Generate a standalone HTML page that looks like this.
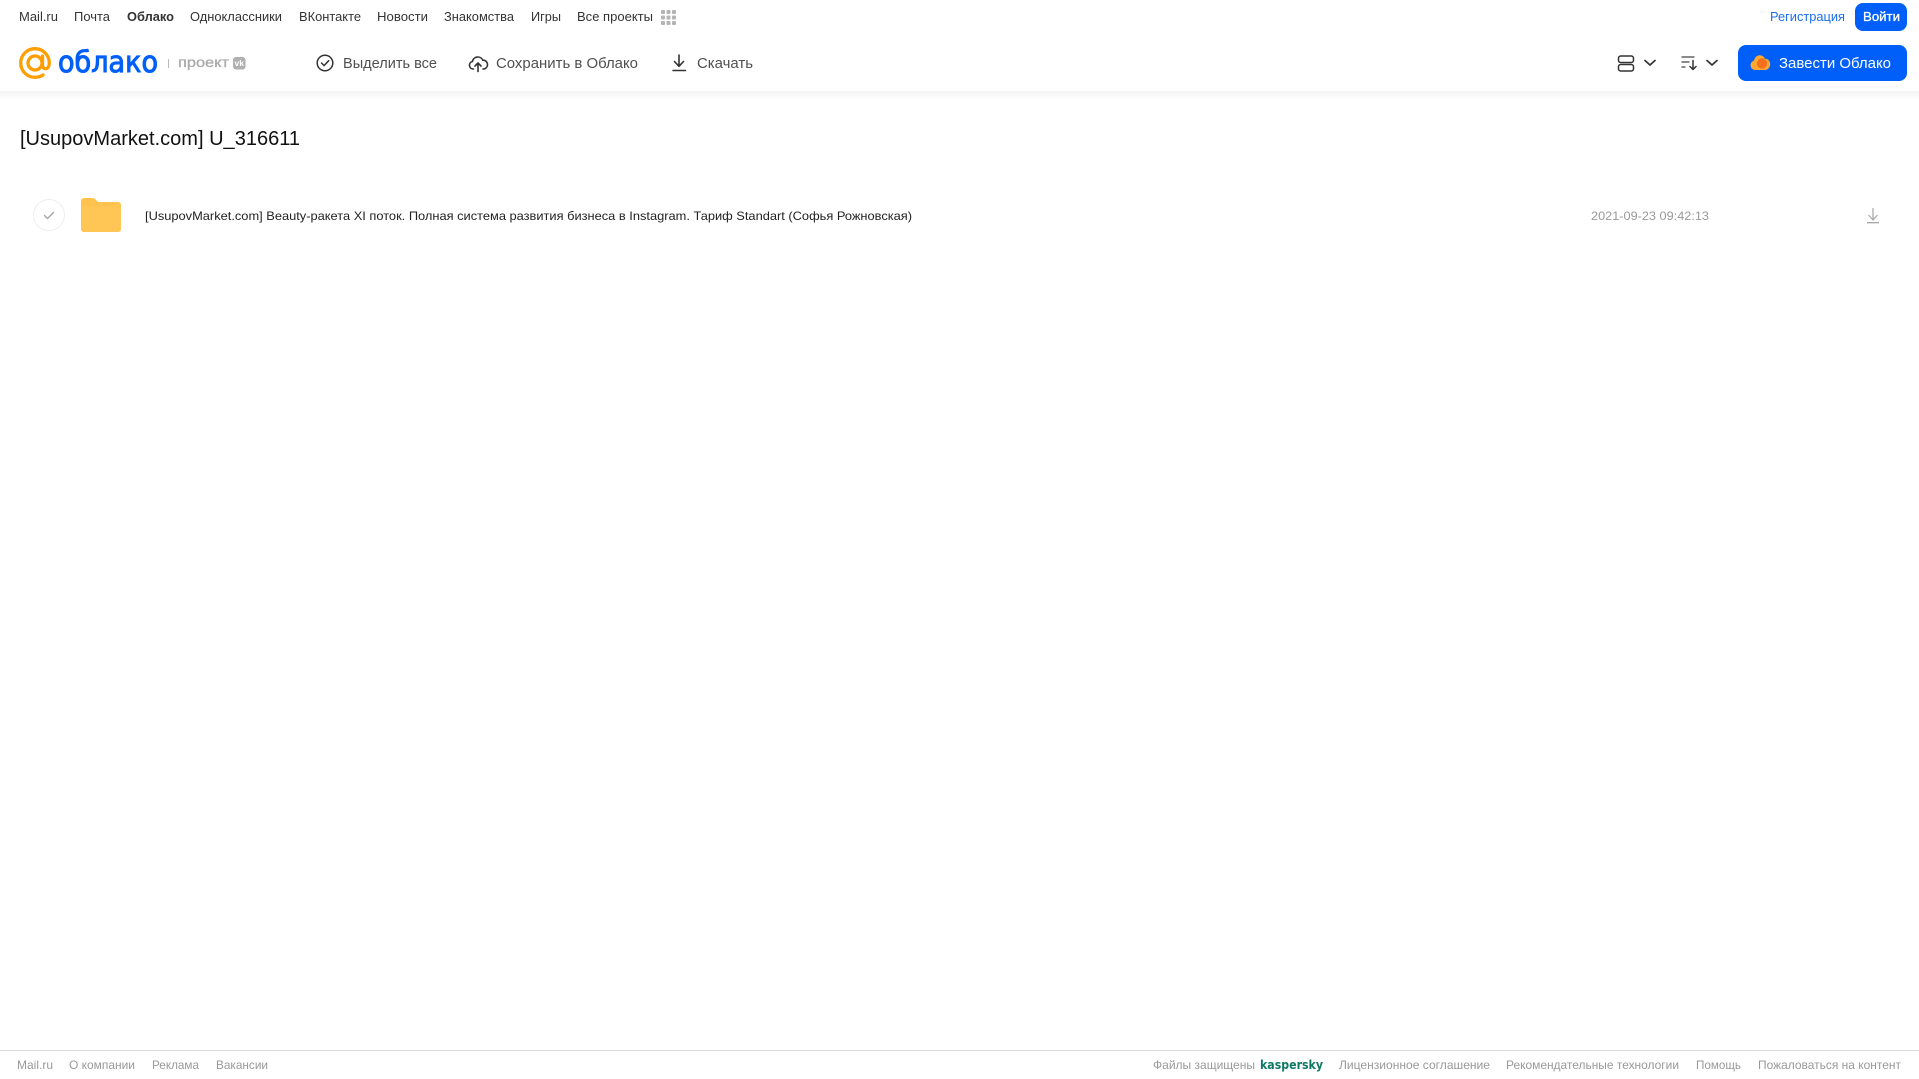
<!DOCTYPE html>
<html lang="ru">
<head>
<meta charset="utf-8">
<title>Облако</title>
<style>
html,body{margin:0;padding:0;width:1919px;height:1079px;overflow:hidden;background:#fff}
svg{display:block}
text{font-family:"Liberation Sans",Arial,sans-serif;white-space:pre}
.n{font-size:13px;fill:#333}
.t{font-size:15px;fill:#505050}
.f{font-size:12px;fill:#999}
</style>
</head>
<body>
<svg width="1919" height="1079" viewBox="0 0 1919 1079" xmlns="http://www.w3.org/2000/svg">
<defs>
<linearGradient id="sh" x1="0" y1="0" x2="0" y2="1"><stop offset="0" stop-color="#f3f3f3"/><stop offset="1" stop-color="#fff"/></linearGradient>
</defs>
<rect x="0" y="91" width="1919" height="9" fill="url(#sh)"/>

<!-- top nav -->
<text class="n" x="19" y="21" textLength="39" lengthAdjust="spacingAndGlyphs">Mail.ru</text>
<text class="n" x="74" y="21" textLength="36" lengthAdjust="spacingAndGlyphs">Почта</text>
<text class="n" x="127" y="21" textLength="47" lengthAdjust="spacingAndGlyphs" font-weight="700">Облако</text>
<text class="n" x="190" y="21" textLength="92" lengthAdjust="spacingAndGlyphs">Одноклассники</text>
<text class="n" x="299" y="21" textLength="62" lengthAdjust="spacingAndGlyphs">ВКонтакте</text>
<text class="n" x="377" y="21" textLength="51" lengthAdjust="spacingAndGlyphs">Новости</text>
<text class="n" x="444" y="21" textLength="70" lengthAdjust="spacingAndGlyphs">Знакомства</text>
<text class="n" x="531" y="21" textLength="30" lengthAdjust="spacingAndGlyphs">Игры</text>
<text class="n" x="577" y="21" textLength="76" lengthAdjust="spacingAndGlyphs">Все проекты</text>
<g fill="#b4b4b4">
<rect x="661" y="10" width="4" height="4" rx="1"/><rect x="666.5" y="10" width="4" height="4" rx="1"/><rect x="672" y="10" width="4" height="4" rx="1"/>
<rect x="661" y="15.500" width="4" height="4" rx="1"/><rect x="666.5" y="15.500" width="4" height="4" rx="1"/><rect x="672" y="15.500" width="4" height="4" rx="1"/>
<rect x="661" y="21" width="4" height="4" rx="1"/><rect x="666.5" y="21" width="4" height="4" rx="1"/><rect x="672" y="21" width="4" height="4" rx="1"/>
</g>
<text class="n" x="1770" y="21" textLength="75" lengthAdjust="spacingAndGlyphs" style="fill:#1a6fe8">Регистрация</text>
<rect x="1855" y="3" width="52" height="28" rx="8" fill="#005ff9"/>
<text class="n" x="1863" y="21" textLength="37" lengthAdjust="spacingAndGlyphs" stroke="#fff" stroke-width=".3" style="fill:#fff">Войти</text>

<!-- logo -->
<circle cx="35" cy="63" r="7" fill="none" stroke="#ff9e00" stroke-width="3.300"/>
<path d="M42.500 56v9c0 5.500 6.800 5 6.800-2 0-7.900-6.400-14.300-14.300-14.300S20.700 55.100 20.700 63 27.100 77.300 35 77.300c3 0 5.500-.7 8-2.300" fill="none" stroke="#ff9e00" stroke-width="3.300" stroke-linecap="round"/>
<text x="58" y="72" textLength="100" lengthAdjust="spacingAndGlyphs" font-size="29" stroke="#005ff9" stroke-width="1" style="font-family:'DejaVu Sans',sans-serif;fill:#005ff9">облако</text>
<rect x="168" y="59" width="1" height="9" fill="#bbb"/>
<text x="178" y="67" textLength="51" lengthAdjust="spacingAndGlyphs" font-size="14" stroke="#aaa" stroke-width=".3" fill="#aaa">проект</text>
<rect x="233" y="57" width="12.500" height="12.500" rx="3" fill="#b0b0b0"/>
<text x="234.500" y="66" textLength="9.500" lengthAdjust="spacingAndGlyphs" font-size="8" font-weight="700" fill="#fff">vk</text>

<!-- toolbar -->
<circle cx="325" cy="63" r="7.800" fill="none" stroke="#333" stroke-width="1.500"/>
<path d="M321.500 63l2.600 2.600 4.600-4.900" fill="none" stroke="#333" stroke-width="1.500" stroke-linecap="round" stroke-linejoin="round"/>
<text class="t" x="343" y="68" textLength="94" lengthAdjust="spacingAndGlyphs">Выделить все</text>

<path d="M473.500 69h-.5a3.800 3.800 0 0 1-.6-7.500 5.500 5.500 0 0 1 10.400-1.300 4.300 4.300 0 0 1 .7 8.800h-.5" fill="none" stroke="#333" stroke-width="1.600" stroke-linecap="round"/>
<path d="M478 71.500v-8M475 66l3-3 3 3" fill="none" stroke="#333" stroke-width="1.600" stroke-linecap="round" stroke-linejoin="round"/>
<text class="t" x="496" y="68" textLength="142" lengthAdjust="spacingAndGlyphs">Сохранить в Облако</text>

<path d="M679 55v11M674.500 61.500l4.500 4.800 4.500-4.800M673 70.500h12.500" fill="none" stroke="#333" stroke-width="1.600" stroke-linecap="round" stroke-linejoin="round"/>
<text class="t" x="697" y="68" textLength="56" lengthAdjust="spacingAndGlyphs">Скачать</text>

<!-- view / sort -->
<rect x="1618.500" y="56" width="15" height="6.500" rx="2.200" fill="none" stroke="#333" stroke-width="1.500"/>
<rect x="1618.500" y="64.500" width="15" height="6.500" rx="2.200" fill="none" stroke="#333" stroke-width="1.500"/>
<path d="M1645 60.500l5 4.500 5-4.500" fill="none" stroke="#333" stroke-width="1.700" stroke-linecap="round" stroke-linejoin="round"/>
<path d="M1681.500 57h13M1681.500 62h8M1681.500 67h4" fill="none" stroke="#444" stroke-width="1.200"/>
<path d="M1693 60.500v9M1690 66.500l3 3 3-3" fill="none" stroke="#333" stroke-width="1.500" stroke-linecap="round" stroke-linejoin="round"/>
<path d="M1707 60.500l5 4.500 5-4.500" fill="none" stroke="#333" stroke-width="1.700" stroke-linecap="round" stroke-linejoin="round"/>

<!-- CTA -->
<rect x="1738" y="45" width="169" height="36" rx="8" fill="#005ff9"/>
<path d="M1755 70a4.800 4.800 0 0 1-1-9.400c.8-3.300 3.100-5.300 5.700-5.300 2.400 0 4.300 1.500 5.300 3.600 3-.3 5.200 2.200 5.200 5.400 0 3.300-2.400 5.700-5.200 5.700z" fill="#ffa930"/>
<circle cx="1762" cy="63.500" r="5.200" fill="#f4701f"/>
<text x="1779" y="68" textLength="112" lengthAdjust="spacingAndGlyphs" font-size="15" fill="#fff">Завести Облако</text>

<!-- title -->
<text x="20" y="145" textLength="280" lengthAdjust="spacingAndGlyphs" font-size="20" fill="#111">[UsupovMarket.com] U_316611</text>

<!-- row -->
<circle cx="49" cy="215" r="15.500" fill="#fff" stroke="#eee" stroke-width="1"/>
<path d="M44.500 215.500l3 3 6-6" fill="none" stroke="#a5a5a5" stroke-width="1.400" stroke-linecap="round" stroke-linejoin="round"/>
<path d="M81 201a3 3 0 0 1 3-3h8c2 0 3 .7 4 2s2 2 4 2h18a3 3 0 0 1 3 3v24a3 3 0 0 1-3 3H84a3 3 0 0 1-3-3z" fill="#ffc24e"/>
<path d="M81 206.500h40V229a3 3 0 0 1-3 3H84a3 3 0 0 1-3-3z" fill="#ffc655"/>
<text x="145" y="220" textLength="767" lengthAdjust="spacingAndGlyphs" font-size="12" fill="#222">[UsupovMarket.com] Beauty-ракета XI поток. Полная система развития бизнеса в Instagram. Тариф Standart (Софья Рожновская)</text>
<text x="1591" y="220" textLength="118" lengthAdjust="spacingAndGlyphs" font-size="12" fill="#999">2021-09-23 09:42:13</text>
<path d="M1873 208v12M1868.500 215l4.500 5 4.500-5M1867 222.700h12" fill="none" stroke="#aaa" stroke-width="1.300" stroke-linejoin="round"/>

<!-- footer -->
<rect x="0" y="1050" width="1919" height="1" fill="#d9d9d9"/>
<text class="f" x="17" y="1069" textLength="36" lengthAdjust="spacingAndGlyphs">Mail.ru</text>
<text class="f" x="69" y="1069" textLength="66" lengthAdjust="spacingAndGlyphs">О компании</text>
<text class="f" x="152" y="1069" textLength="47" lengthAdjust="spacingAndGlyphs">Реклама</text>
<text class="f" x="216" y="1069" textLength="52" lengthAdjust="spacingAndGlyphs">Вакансии</text>
<text class="f" x="1153" y="1069" textLength="102" lengthAdjust="spacingAndGlyphs">Файлы защищены</text>
<text x="1260" y="1069" textLength="63" lengthAdjust="spacingAndGlyphs" font-size="12" font-weight="700" style="font-family:'DejaVu Sans',sans-serif" fill="#0f7a63">kaspersky</text>
<text class="f" x="1339" y="1069" textLength="151" lengthAdjust="spacingAndGlyphs">Лицензионное соглашение</text>
<text class="f" x="1506" y="1069" textLength="173" lengthAdjust="spacingAndGlyphs">Рекомендательные технологии</text>
<text class="f" x="1696" y="1069" textLength="45" lengthAdjust="spacingAndGlyphs">Помощь</text>
<text class="f" x="1758" y="1069" textLength="143" lengthAdjust="spacingAndGlyphs">Пожаловаться на контент</text>
</svg>
</body>
</html>
